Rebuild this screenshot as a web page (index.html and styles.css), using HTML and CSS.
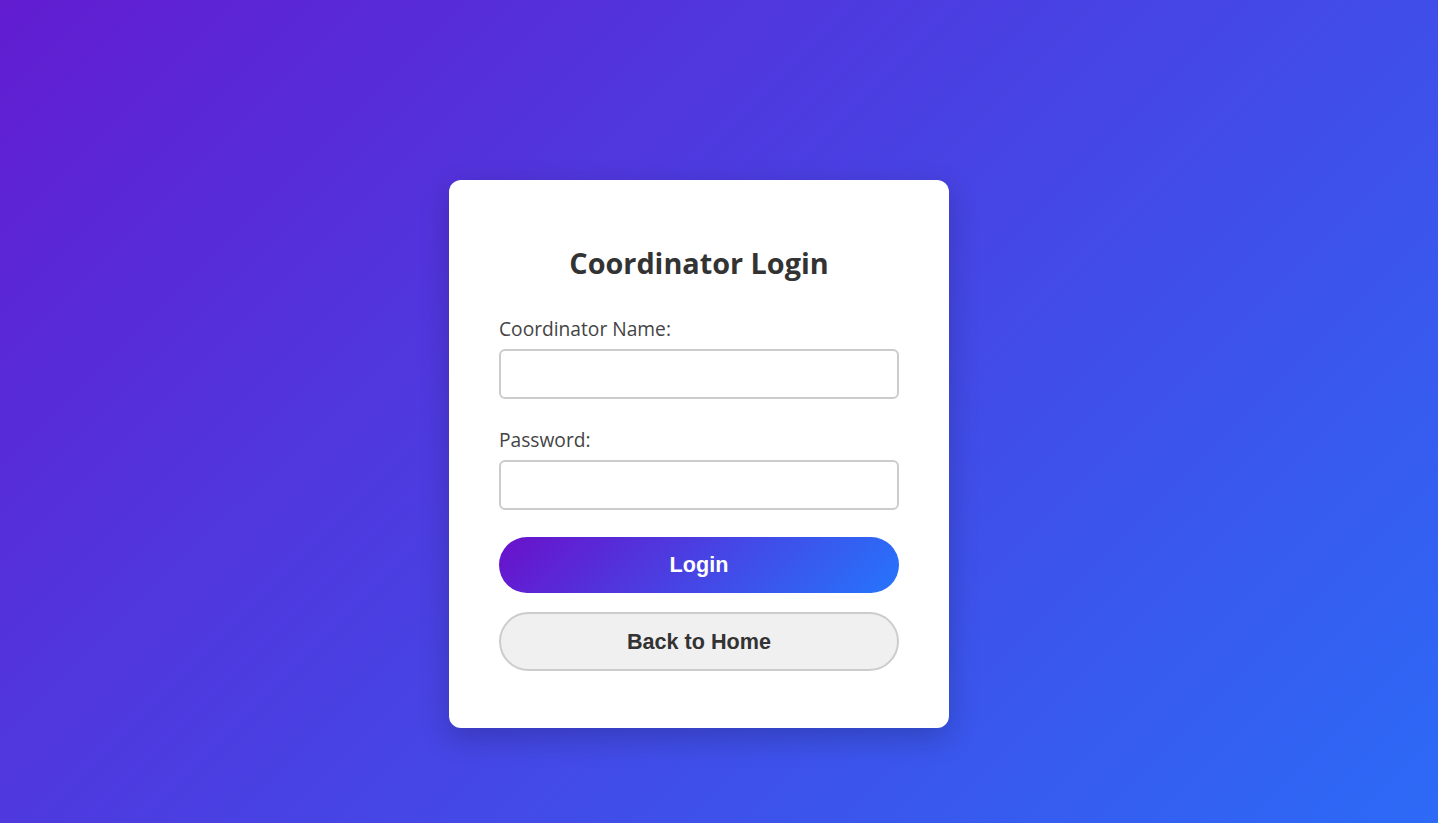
FILE: index.html
```html
<!DOCTYPE html>
<html lang="en">
<head>
<meta charset="utf-8">
<title>Coordinator Login</title>
<link rel="stylesheet" href="styles.css">
</head>
<body>
<main class="page">
  <form class="card" onsubmit="return false;">
    <h2 class="title">Coordinator Login</h2>
    <label class="label" for="name">Coordinator Name:</label>
    <input class="input" id="name" type="text">
    <label class="label label-gap" for="pw">Password:</label>
    <input class="input" id="pw" type="password">
    <button class="btn btn-primary" type="submit">Login</button>
    <button class="btn btn-secondary" type="button">Back to Home</button>
  </form>
</main>
</body>
</html>
```
FILE: styles.css
```css
* { box-sizing: border-box; }
html, body { margin: 0; height: 100%; }
body {
  font-family: "Open Sans", "Noto Sans", sans-serif;
  background: linear-gradient(135deg, #6a11cb -15%, #2575fc 114%);
  min-height: 100vh;
}
.page {
  min-height: 100vh;
  display: flex;
  align-items: center;
  justify-content: center;
  padding: 85px 40px 0 0;
}
.card {
  width: 500px;
  height: 548px;
  background: #fff;
  border-radius: 12px;
  padding: 50px;
  display: flex;
  flex-direction: column;
  box-shadow: 0 10px 30px rgba(0, 0, 0, 0.2);
}
.title {
  margin: 14px 0 0;
  font-size: 28.8px;
  font-weight: 700;
  color: #333;
  text-align: center;
  line-height: 38px;
}
.label {
  margin-top: 35px;
  margin-bottom: 8px;
  font-size: 19.2px;
  line-height: 24px;
  color: #444;
}
.label-gap { margin-top: 29px; }
.input {
  height: 50px;
  border: 2px solid #ccc;
  border-radius: 6px;
  font-size: 16px;
  padding: 0 12px;
  outline: none;
}
.btn {
  font-family: "Liberation Sans", Arial, sans-serif;
  font-weight: 700;
  font-size: 21.6px;
  border-radius: 30px;
  cursor: pointer;
}
.btn-primary {
  margin-top: 27px;
  height: 56px;
  border: none;
  color: #fff;
  background: linear-gradient(135deg, #6a11cb 0%, #2575fc 100%);
}
.btn-secondary {
  margin-top: 19px;
  height: 59px;
  color: #333;
  background: #f0f0f0;
  border: 2px solid #ccc;
}
```
